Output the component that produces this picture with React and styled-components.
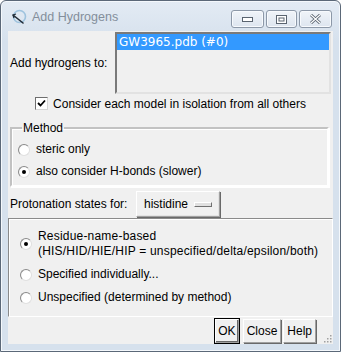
import React from 'react';
import styled, { createGlobalStyle } from 'styled-components';

const GlobalStyle = createGlobalStyle`
  html, body {
    margin: 0;
    padding: 0;
    background: #ffffff;
  }
  body {
    font-family: "Liberation Sans", Arial, sans-serif;
  }
`;

const Frame = styled.div`
  width: 341px;
  height: 352px;
  box-sizing: border-box;
  border: 1px solid #5b6878;
  border-radius: 6px 6px 0 0;
  background: linear-gradient(#e3ebf4, #d6e1ed 40px, #d6e1ed);
  box-shadow: inset 0 0 0 1px #f4f8fc;
  display: flex;
  flex-direction: column;
  padding: 0 7px 7px 7px;
`;

const TitleBar = styled.div`
  height: 30px;
  display: flex;
  align-items: flex-start;
`;

const TitleLeft = styled.div`
  display: flex;
  align-items: center;
  gap: 5px;
  padding: 8px 0 0 3px;
  flex: 1;
`;

const TitleText = styled.span`
  font-family: "Liberation Sans", Arial, sans-serif;
  font-size: 12.5px;
  color: #838e9b;
`;

const Caption = styled.div`
  display: flex;
  gap: 2px;
  padding-top: 9px;
  margin-right: 1px;
`;

const CaptionButton = styled.div`
  width: ${p => p.w}px;
  height: 18px;
  box-sizing: border-box;
  border: 1px solid #8c98a8;
  border-radius: 3px;
  background: linear-gradient(#f0f4f9, #dde5ef);
  box-shadow: inset 0 0 0 1px #f7fafd;
  display: flex;
  align-items: center;
  justify-content: center;
`;

const Client = styled.div`
  flex: 1;
  background: #f0f0f0;
  display: flex;
  flex-direction: column;
  font-size: 12px;
  color: #000;
`;

const TopRow = styled.div`
  display: flex;
  align-items: center;
  padding: 1px 2px 0 2px;
`;

const RowLabel = styled.span`
  width: ${p => p.w}px;
  flex: none;
`;

const ListBox = styled.div`
  flex: 1;
  height: 62px;
  box-sizing: border-box;
  border-top: 2px solid #7a7a7a;
  border-left: 2px solid #7a7a7a;
  border-right: 2px solid #e2e2e2;
  border-bottom: 2px solid #e2e2e2;
  background: #f0f0f0;
`;

const ListItem = styled.div`
  background: ${p => (p.selected ? '#3399ff' : 'transparent')};
  color: ${p => (p.selected ? '#ffffff' : '#000000')};
  height: 16px;
  line-height: 16px;
  font-family: "DejaVu Sans", Verdana, sans-serif;
  font-size: 12px;
  padding-left: 2px;
`;

const CheckRow = styled.label`
  display: flex;
  align-items: center;
  justify-content: center;
  gap: 5px;
  height: 17px;
  margin-top: 1px;
`;

const CheckBox = styled.span`
  width: 13px;
  height: 13px;
  box-sizing: border-box;
  border: 1px solid #6e6e6e;
  border-right-color: #d6d6d6;
  border-bottom-color: #d6d6d6;
  background: #ffffff;
  display: flex;
  align-items: center;
  justify-content: center;
`;

const Group = styled.fieldset`
  margin: 9px 4px 0 2px;
  padding: 7px 5px 6px 6px;
  border: 2px solid;
  border-color: #c2c2c2 #ffffff #ffffff #c2c2c2;
  box-shadow: inset 1px 1px 0 #ffffff, 1px 1px 0 #ffffff;
  display: flex;
  flex-direction: column;
  gap: 7px;
`;

const Legend = styled.legend`
  padding: 0 1px;
  margin-left: 4px;
  line-height: 14px;
`;

const Radio = styled.label`
  display: flex;
  align-items: center;
  gap: 6px;
  line-height: 15px;
`;

const RadioDot = styled.span`
  width: 12px;
  height: 12px;
  flex: none;
  box-sizing: border-box;
  border-radius: 50%;
  border: 1px solid #8a8a8a;
  border-right-color: #e0e0e0;
  border-bottom-color: #e0e0e0;
  background: radial-gradient(circle at 60% 60%, #ffffff 55%, #e8e8e8);
  display: flex;
  align-items: center;
  justify-content: center;
  &::after {
    content: '';
    width: 4px;
    height: 4px;
    border-radius: 50%;
    background: ${p => (p.checked ? '#000000' : 'transparent')};
  }
`;

const ProtRow = styled.div`
  display: flex;
  align-items: center;
  padding: 4px 2px 1px 2px;
`;

const MenuButton = styled.div`
  width: 84px;
  height: 26px;
  box-sizing: border-box;
  border: 1px solid;
  border-color: #ffffff #a0a0a0 #a0a0a0 #ffffff;
  box-shadow: 1px 1px 0 #696969, inset -1px -1px 0 #e3e3e3;
  display: flex;
  align-items: center;
  justify-content: space-between;
  padding: 0 7px 0 7px;
`;

const MenuIndicator = styled.span`
  width: 18px;
  height: 5px;
  box-sizing: border-box;
  border: 1px solid;
  border-color: #ffffff #707070 #707070 #ffffff;
  background: #e0e0e0;
`;

const OptionsBox = styled.div`
  height: 99px;
  box-sizing: border-box;
  border: 1px solid;
  border-color: #8a8a8a #ffffff #ffffff #8a8a8a;
  box-shadow: inset 1px 1px 0 #ffffff;
  padding: 10px 0 0 11px;
  display: flex;
  flex-direction: column;
  gap: 8px;
`;

const TwoLines = styled.span`
  display: flex;
  flex-direction: column;
  letter-spacing: 0.2px;
`;

const ButtonRow = styled.div`
  flex: 1;
  display: flex;
  align-items: center;
  justify-content: flex-end;
  gap: 2px;
  padding-right: 17px;
  position: relative;
`;

const PushButton = styled.button`
  font: inherit;
  font-size: 12px;
  color: #000;
  height: ${p => (p.default ? 24 : 24)}px;
  padding: 0 ${p => (p.default ? 2 : 3)}px;
  background: #f0f0f0;
  border: 1px solid;
  border-color: #ffffff #a0a0a0 #a0a0a0 #ffffff;
  box-shadow: ${p =>
    p.default
      ? '0 0 0 1px #000000, inset -1px -1px 0 #696969'
      : '1px 1px 0 #696969'};
  margin: ${p => (p.default ? '0 2px 0 1px' : '0')};
`;

const Grip = styled.svg`
  position: absolute;
  right: 1px;
  bottom: 1px;
`;

function ChimeraIcon() {
  return (
    <svg width="16" height="16" viewBox="0 0 16 16">
      <circle cx="8.5" cy="7.5" r="6" fill="none" stroke="#9ec3de" strokeWidth="1.6" />
      <path d="M2 6 L12 14" stroke="#1f2a36" strokeWidth="1.6" strokeLinecap="round" />
      <path d="M2 6 L5 5 M2 6 L3 9" stroke="#1f2a36" strokeWidth="1.2" />
    </svg>
  );
}

function CheckMark() {
  return (
    <svg width="9" height="9" viewBox="0 0 9 9">
      <path d="M1 4 L3.5 6.5 L8 1.5" stroke="#000" strokeWidth="1.8" fill="none" />
    </svg>
  );
}

export default function App() {
  return (
    <>
      <GlobalStyle />
      <Frame>
        <TitleBar>
          <TitleLeft>
            <ChimeraIcon />
            <TitleText>Add Hydrogens</TitleText>
          </TitleLeft>
          <Caption>
            <CaptionButton w={33}>
              <svg width="11" height="5" viewBox="0 0 11 5">
                <rect x="0.5" y="0.5" width="10" height="4" fill="#ffffff" stroke="#5a6470" />
              </svg>
            </CaptionButton>
            <CaptionButton w={31}>
              <svg width="11" height="9" viewBox="0 0 11 9">
                <rect x="0.5" y="0.5" width="10" height="8" fill="#ffffff" stroke="#5a6470" />
                <rect x="3" y="3" width="5" height="3" fill="none" stroke="#5a6470" />
              </svg>
            </CaptionButton>
            <CaptionButton w={33}>
              <svg width="13" height="10" viewBox="0 0 13 10">
                <path d="M2 1 L11 9 M11 1 L2 9" stroke="#5a6470" strokeWidth="3" />
                <path d="M2 1 L11 9 M11 1 L2 9" stroke="#ffffff" strokeWidth="1.2" />
              </svg>
            </CaptionButton>
          </Caption>
        </TitleBar>
        <Client>
          <TopRow>
            <RowLabel w={105}>Add hydrogens to:</RowLabel>
            <ListBox>
              <ListItem selected>GW3965.pdb (#0)</ListItem>
            </ListBox>
          </TopRow>
          <CheckRow>
            <CheckBox>
              <CheckMark />
            </CheckBox>
            Consider each model in isolation from all others
          </CheckRow>
          <Group>
            <Legend>Method</Legend>
            <Radio>
              <RadioDot />
              steric only
            </Radio>
            <Radio>
              <RadioDot checked />
              also consider H-bonds (slower)
            </Radio>
          </Group>
          <ProtRow>
            <RowLabel w={126}>Protonation states for:</RowLabel>
            <MenuButton>
              histidine
              <MenuIndicator />
            </MenuButton>
          </ProtRow>
          <OptionsBox>
            <Radio>
              <RadioDot checked />
              <TwoLines>
                <span>Residue-name-based</span>
                <span>(HIS/HID/HIE/HIP = unspecified/delta/epsilon/both)</span>
              </TwoLines>
            </Radio>
            <Radio>
              <RadioDot />
              Specified individually...
            </Radio>
            <Radio>
              <RadioDot />
              Unspecified (determined by method)
            </Radio>
          </OptionsBox>
          <ButtonRow>
            <PushButton default>OK</PushButton>
            <PushButton>Close</PushButton>
            <PushButton>Help</PushButton>
            <Grip width="10" height="10" viewBox="0 0 10 10">
              {[[8, 2], [5, 5], [8, 5], [2, 8], [5, 8], [8, 8]].map(([x, y]) => (
                <rect key={`${x}-${y}`} x={x} y={y} width="1.5" height="1.5" fill="#a0a0a0" />
              ))}
            </Grip>
          </ButtonRow>
        </Client>
      </Frame>
    </>
  );
}
